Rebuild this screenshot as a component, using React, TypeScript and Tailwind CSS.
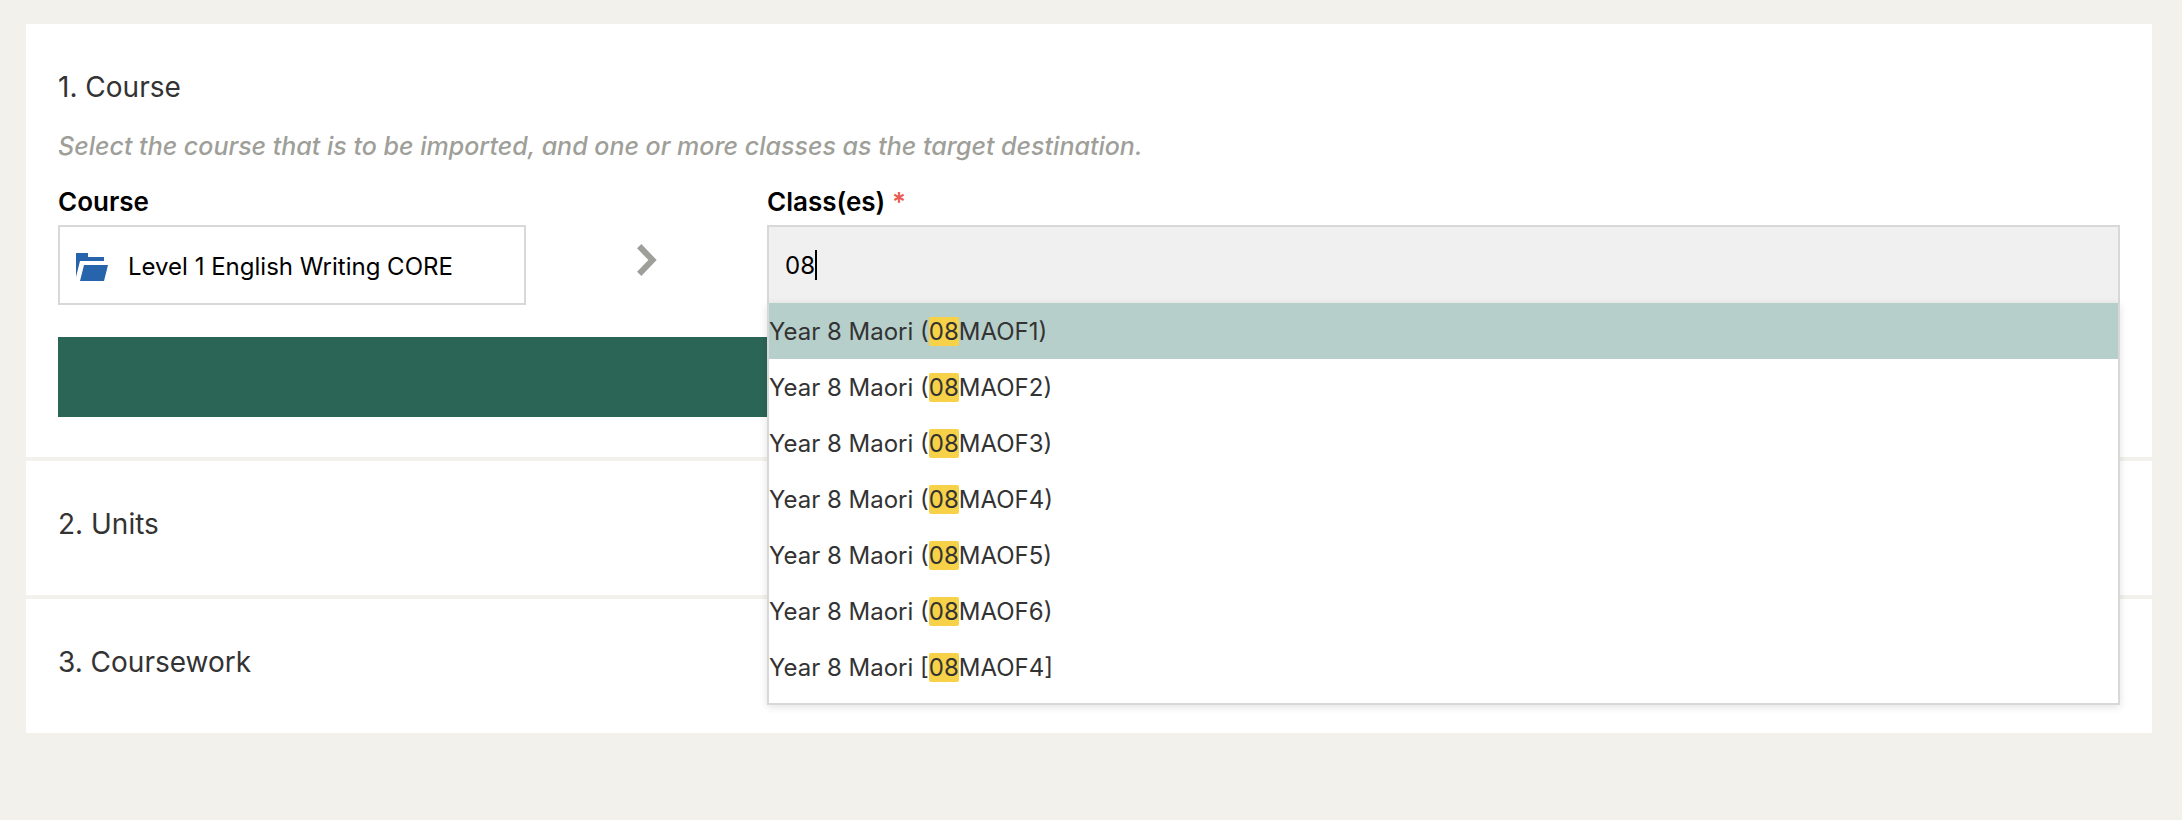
import clsx from "clsx";
import React, { FunctionComponent, ReactNode, useState } from "react";

type ClassOption = {
  name: string;
  code: string;
  brackets: "()" | "[]";
};

const options: ClassOption[] = [
  { name: "Year 8 Maori", code: "08MAOF1", brackets: "()" },
  { name: "Year 8 Maori", code: "08MAOF2", brackets: "()" },
  { name: "Year 8 Maori", code: "08MAOF3", brackets: "()" },
  { name: "Year 8 Maori", code: "08MAOF4", brackets: "()" },
  { name: "Year 8 Maori", code: "08MAOF5", brackets: "()" },
  { name: "Year 8 Maori", code: "08MAOF6", brackets: "()" },
  { name: "Year 8 Maori", code: "08MAOF4", brackets: "[]" },
];

const FolderIcon: FunctionComponent = () => (
  <svg viewBox="0 0 32 28" className="h-7 w-8 shrink-0" fill="#2864ac">
    <path d="M0 0h12v4h16v4H4L0 24z" />
    <path d="M8 12h24l-4 16H4z" />
  </svg>
);

const ChevronIcon: FunctionComponent = () => (
  <svg
    viewBox="0 0 20 32"
    className="h-8 w-5"
    fill="none"
    stroke="#9f9f9a"
    strokeWidth="6"
  >
    <path d="M2.2 2.2 15.5 16 2.2 29.8" />
  </svg>
);

const Section: FunctionComponent<{ title: string; children?: ReactNode }> = ({
  title,
  children,
}) => (
  <section className="bg-white px-8 pt-8 pb-10">
    <h2 className="text-[28px] leading-[62px] text-[#333]">{title}</h2>
    {children}
  </section>
);

const Option: FunctionComponent<{
  option: ClassOption;
  query: string;
  active: boolean;
  onHover: () => void;
}> = ({ option, query, active, onHover }) => {
  const matches = query !== "" && option.code.startsWith(query);

  return (
    <li
      role="option"
      aria-selected={active}
      onMouseEnter={onHover}
      className={clsx(
        "h-14 text-2xl leading-[58px] text-[#333]",
        active && "bg-[#b7cfcb]"
      )}
    >
      {option.name} {option.brackets[0]}
      {matches && (
        <mark className="rounded-xs bg-[#f7d148] text-inherit">{query}</mark>
      )}
      {matches ? option.code.slice(query.length) : option.code}
      {option.brackets[1]}
    </li>
  );
};

const ClassPicker: FunctionComponent = () => {
  const [query, setQuery] = useState("08");
  const [active, setActive] = useState(0);

  return (
    <div className="relative">
      <input
        id="classes"
        role="combobox"
        aria-expanded="true"
        aria-controls="class-options"
        autoComplete="off"
        value={query}
        onChange={(e) => setQuery(e.target.value)}
        className="block h-20 w-full border-2 border-[#d8d8d8] bg-[#f0f0f0] px-4 text-2xl text-black caret-transparent focus:outline-none"
      />
      {/* caret, pushed along by a hidden copy of the text */}
      <div
        aria-hidden="true"
        className="pointer-events-none absolute inset-y-0 left-4.5 flex items-center text-2xl"
      >
        <span className="h-[30px] border-r-2 border-black text-transparent select-none">
          {query}
        </span>
      </div>
      <ul
        id="class-options"
        role="listbox"
        aria-label="Class(es)"
        className="absolute inset-x-0 top-[78px] z-10 border-2 border-t-0 border-[#d8d8d8] bg-white pb-2 shadow-[0_2px_8px_rgba(0,0,0,0.12)]"
      >
        {options.map((option, i) => (
          <Option
            key={i}
            option={option}
            query={query}
            active={i === active}
            onHover={() => setActive(i)}
          />
        ))}
      </ul>
    </div>
  );
};

const App: FunctionComponent = () => {
  return (
    <main className="min-h-screen bg-[#f2f1ec] pt-6 pr-[30px] pb-6 pl-[26px] font-['Inter',sans-serif]">
      <div className="flex flex-col gap-1">
        <Section title="1. Course">
          <p className="mt-2 text-[25px] leading-10 font-medium text-[#9f9f9a] italic">
            Select the course that is to be imported, and one or more classes as
            the target destination.
          </p>
          <div className="mt-4 grid grid-cols-[468fr_241fr_1353fr]">
            <div>
              <label
                htmlFor="course"
                className="block text-[26px] leading-10 font-semibold text-black"
              >
                Course
              </label>
              <button
                id="course"
                type="button"
                className="mt-[3px] flex h-20 w-full items-center gap-5 border-2 border-[#d8d8d8] px-4 pt-1 text-left text-2xl text-black"
              >
                <FolderIcon />
                Level 1 English Writing CORE
              </button>
            </div>
            <div className="flex items-center justify-center pt-8">
              <ChevronIcon />
            </div>
            <div>
              <label
                htmlFor="classes"
                className="mb-[3px] block text-[26px] leading-10 font-semibold text-black"
              >
                Class(es) <span className="text-[#ea5a4f]">*</span>
              </label>
              <ClassPicker />
            </div>
          </div>
          <button
            type="button"
            aria-label="Continue"
            className="mt-8 block h-20 w-full bg-[#2b6556]"
          />
        </Section>
        <Section title="2. Units" />
        <Section title="3. Coursework" />
      </div>
    </main>
  );
};

export default App;
